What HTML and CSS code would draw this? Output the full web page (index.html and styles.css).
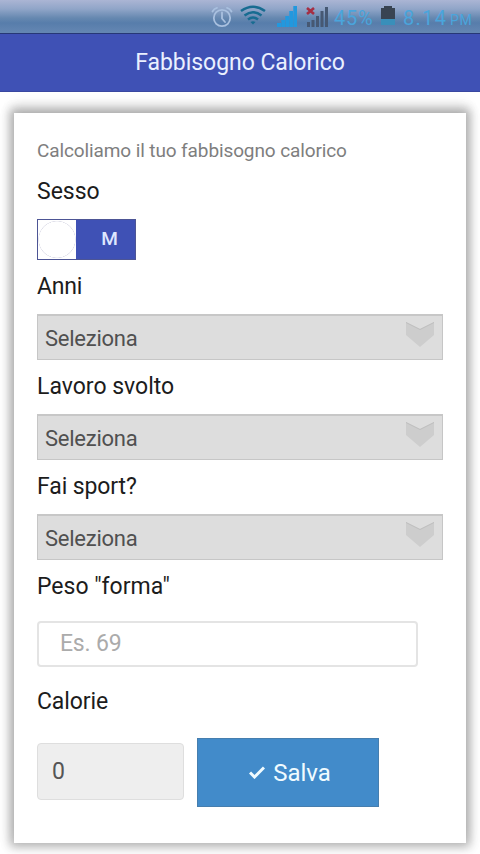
FILE: index.html
```html
<!DOCTYPE html>
<html lang="it">
<head>
<meta charset="utf-8">
<title>Fabbisogno Calorico</title>
<link rel="stylesheet" href="styles.css">
</head>
<body>
<div class="status">
  <svg class="alarm" width="22" height="22" viewBox="0 0 22 22" fill="none" stroke="#a9c0df" stroke-width="1.8" stroke-linecap="round"><circle cx="11" cy="12" r="8.2"/><path d="M11 6.500V12.500L14 16M1.500 5.500Q3 2.500 6 1.800M16 1.800Q19 2.500 20.500 5.500"/></svg>
  <svg class="wifi" width="26" height="20" viewBox="0 0 26 20" fill="none" stroke="#176c91" stroke-width="2.500"><path d="M1 6Q13-2.500 25 6M4.500 10.500Q13 4 21.500 10.500M8 14.500Q13 10.500 18 14.500"/><path d="M10.500 17L13 19.500L15.500 17Q13 15.500 10.500 17Z" fill="#176c91" stroke="none"/></svg>
  <svg class="signal" width="20" height="21" viewBox="0 0 20 21" fill="#2298de"><path d="M0 17h4v4H0zM4.300 14h3.700v7H4.300zM8.300 10h3.700v11H8.300zM12.300 5h3.700v16h-3.700zM16.300 0H20v21h-3.700z"/></svg>
  <svg class="nosim" width="22" height="21" viewBox="0 0 22 21"><path d="M1 16h3v5H1zM5.500 14h3v7h-3zM10 10h3v11h-3zM14.500 5h3v16h-3zM19 1h3v20h-3z" fill="#465873"/><path d="M1 2L8 8M8 2L1 8" stroke="#a52e43" stroke-width="2.600"/></svg>
  <span class="percent">45%</span>
  <svg class="battery" width="14" height="20" viewBox="0 0 14 20"><path d="M3 0h8v2h3v11H0V2h3z" fill="#384452"/><path d="M0 13h14v6H0z" fill="#398fba"/></svg>
  <span class="clock">8.14</span><span class="meridiem">PM</span>
</div>
<header class="bar"><h1>Fabbisogno Calorico</h1></header>
<main class="card">
  <p class="intro">Calcoliamo il tuo fabbisogno calorico</p>
  <div class="label sex">Sesso</div>
  <div class="switch"><span class="knob"></span><span class="value">M</span></div>
  <div class="label years">Anni</div>
  <div class="select"><span>Seleziona</span><svg width="28" height="26" viewBox="0 0 28 26"><path d="M0 0L14 7L28 0V13L14 25L0 13Z" fill="#cdcdcd"/><path d="M0 .5L14 7.500L28 .5" fill="none" stroke="#bebebe"/></svg></div>
  <div class="label work">Lavoro svolto</div>
  <div class="select"><span>Seleziona</span><svg width="28" height="26" viewBox="0 0 28 26"><path d="M0 0L14 7L28 0V13L14 25L0 13Z" fill="#cdcdcd"/><path d="M0 .5L14 7.500L28 .5" fill="none" stroke="#bebebe"/></svg></div>
  <div class="label sport">Fai sport?</div>
  <div class="select"><span>Seleziona</span><svg width="28" height="26" viewBox="0 0 28 26"><path d="M0 0L14 7L28 0V13L14 25L0 13Z" fill="#cdcdcd"/><path d="M0 .5L14 7.500L28 .5" fill="none" stroke="#bebebe"/></svg></div>
  <div class="label weight">Peso "forma"</div>
  <div class="input">Es. 69</div>
  <div class="label calories">Calorie</div>
  <div class="actions">
    <div class="result">0</div>
    <div class="save"><svg width="16" height="13" viewBox="0 0 16 13" fill="none" stroke="#f0fbff" stroke-width="3"><path d="M1 6.500L5.500 11L15 1.500"/></svg><span>Salva</span></div>
  </div>
</main>
</body>
</html>
```
FILE: styles.css
```css
* { box-sizing: border-box; }
body { margin: 0; height: 854px; overflow: hidden; background: #fff; font-family: Roboto, "Liberation Sans", sans-serif; color: #1c1c1c; }
.status { height: 34px; display: flex; align-items: flex-start; padding-left: 211px; background: linear-gradient(#abb5d4 0, #90a5c8 9px, #6688b0 18px, #577dab 23px, #6486b2 32px); border-bottom: 1px solid #273876; color: #4aa5dc; white-space: nowrap; }
.status svg { flex: none; }
.alarm { margin-top: 6px; }
.wifi { margin: 5px 0 0 7px; }
.signal { margin: 6px 0 0 11px; }
.nosim { margin: 6px 0 0 9px; }
.percent { width: 40px; margin: 7px 0 0 6px; font-size: 20px; line-height: 22px; letter-spacing: .8px; }
.battery { margin: 6px 0 0 7px; }
.clock { width: 44px; margin: 7px 0 0 8px; font-size: 20px; line-height: 22px; letter-spacing: 1.300px; }
.meridiem { margin: 11px 0 0 3px; font-size: 14px; line-height: 18px; letter-spacing: .7px; }
.bar { position: relative; z-index: 1; height: 58px; background: #3f51b5; border-bottom: 1px solid #3947a0; }
h1 { margin: 0; padding-top: 1px; font-size: 23px; line-height: 56px; font-weight: 400; text-align: center; letter-spacing: -.05px; color: #eaf0ff; }
.card { width: 452px; height: 730px; margin: 21px 0 0 14px; padding: 25px 24px 0 23px; background: #fff; box-shadow: 0 0 9px 4px rgba(0,0,0,.24), 0 -8px 12px 2px rgba(0,0,0,.07), 0 0 12px 4px rgba(0,0,0,.08); }
.intro { margin: 0; height: 25px; font-size: 19px; line-height: 26px; letter-spacing: -.11px; color: #7e7e7e; }
.label { font-size: 23px; line-height: 28px; white-space: nowrap; }
.sex { height: 56px; padding-top: 15px; }
.switch { width: 99px; height: 41px; display: flex; border: 1px solid #4d5595; background: #3f51b5; }
.knob { width: 38px; height: 39px; background: radial-gradient(circle closest-side, #fff 94%, #dddde8 96%, #fff 100%); }
.value { flex: 1; padding-left: 8px; text-align: center; line-height: 38px; font-size: 19px; font-weight: 500; color: #dfe7ff; }
.years { height: 54px; padding-top: 13px; letter-spacing: -.2px; }
.select { height: 46px; display: flex; justify-content: space-between; width: 406px; padding: 0 8px 0 7px; border: 1px solid #c6c6c6; border-top: 2px solid #c7c7c7; background: #ddd; font-size: 22px; letter-spacing: -.25px; line-height: 45px; color: #505050; }
.select svg { margin-top: 6px; }
.work { height: 54px; padding-top: 13px; }
.sport { height: 54px; padding-top: 13px; letter-spacing: -.1px; }
.weight { height: 61px; padding-top: 13px; }
.input { width: 381px; height: 46px; padding-left: 21px; border: 2px solid #e4e4e4; border-radius: 4px; font-size: 23px; letter-spacing: -.2px; line-height: 41px; color: #ababab; }
.calories { height: 71px; padding-top: 21px; letter-spacing: -.1px; }
.actions { display: flex; gap: 13px; align-items: flex-start; }
.result { width: 147px; height: 57px; margin-top: 5px; padding-left: 14px; background: #eee; border: 1px solid #dedede; border-radius: 4px; font-size: 23px; line-height: 55px; color: #555; }
.save { width: 182px; height: 69px; display: flex; align-items: center; justify-content: center; gap: 8px; background: #428bca; border: 1px solid #467eae; color: #f0fbff; font-size: 24px; padding-left: 4px; }
```
